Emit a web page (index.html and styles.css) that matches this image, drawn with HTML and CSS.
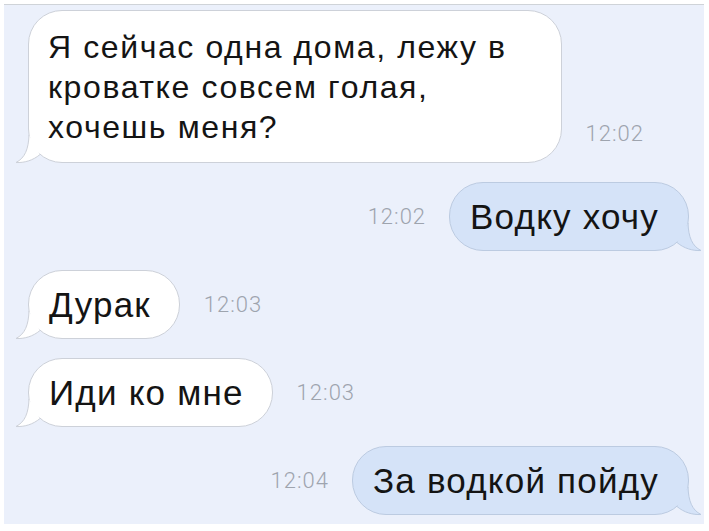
FILE: index.html
```html
<!DOCTYPE html>
<html lang="ru">
<head>
    <meta charset="UTF-8">
    <meta name="viewport" content="width=device-width, initial-scale=1.0">
    <title>Переписка</title>
    <link rel="stylesheet" href="styles.css">
</head>
<body>
    <div class="chat">
        <div class="row row-end">
            <div class="bubble in multi">
                Я сейчас одна дома, лежу в<br>кроватке совсем голая,<br>хочешь меня?
                <svg class="tail" width="30" height="28" viewBox="0 0 30 28"><path d="M14 0 C13.5 14 10 23 1 27.5 C9 28 18 25.5 25 19.5"/></svg>
            </div>
            <span class="time">12:02</span>
        </div>

        <div class="row out-row">
            <span class="time">12:02</span>
            <div class="bubble out">
                Водку хочу
                <svg class="tail" width="30" height="28" viewBox="0 0 30 28"><path d="M14 0 C13.5 14 10 23 1 27.5 C9 28 18 25.5 25 19.5"/></svg>
            </div>
        </div>

        <div class="row">
            <div class="bubble in">
                Дурак
                <svg class="tail" width="30" height="28" viewBox="0 0 30 28"><path d="M14 0 C13.5 14 10 23 1 27.5 C9 28 18 25.5 25 19.5"/></svg>
            </div>
            <span class="time">12:03</span>
        </div>

        <div class="row">
            <div class="bubble in">
                Иди ко мне
                <svg class="tail" width="30" height="28" viewBox="0 0 30 28"><path d="M14 0 C13.5 14 10 23 1 27.5 C9 28 18 25.5 25 19.5"/></svg>
            </div>
            <span class="time">12:03</span>
        </div>

        <div class="row out-row">
            <span class="time">12:04</span>
            <div class="bubble out">
                За водкой пойду
                <svg class="tail" width="30" height="28" viewBox="0 0 30 28"><path d="M14 0 C13.5 14 10 23 1 27.5 C9 28 18 25.5 25 19.5"/></svg>
            </div>
        </div>
    </div>
</body>
</html>
```

FILE: styles.css
```css
body {
    margin: 0;
    background: #ffffff;
    font-family: "Liberation Sans", Arial, sans-serif;
}
.chat {
    margin: 4px 5px 0 4px;
    height: 520px;
    border-top: 1px solid #cfd3d8;
    background: #ebf0fb;
    padding: 5px 15px 0 24px;
    box-sizing: border-box;
    display: flex;
    flex-direction: column;
    gap: 19px;
}
.row {
    display: flex;
    align-items: center;
    gap: 24px;
}
.row-end {
    align-items: flex-end;
}
.row-end .time {
    margin-bottom: 18px;
}
.out-row {
    justify-content: flex-end;
    gap: 23px;
}
.bubble {
    position: relative;
    font-size: 35px;
    line-height: 41px;
    letter-spacing: 1.2px;
    color: #141414;
    padding: 13px 28px 13px 20px;
    border-radius: 34px;
    white-space: nowrap;
}
.bubble.in {
    background: #ffffff;
    border: 1px solid #cdd1d9;
}
.bubble.out {
    background: #d5e3f8;
    border: 1px solid #bccbe1;
    padding: 13px 29px 13px 20px;
}
.bubble.multi {
    font-size: 32px;
    line-height: 40px;
    letter-spacing: 1.6px;
    padding: 16px 54px 15px 19px;
}
.tail {
    position: absolute;
    bottom: -1px;
    left: -14px;
    overflow: visible;
}
.bubble.in .tail path {
    fill: #ffffff;
    stroke: #cdd1d9;
    stroke-width: 1;
}
.bubble.out .tail {
    left: auto;
    right: -14px;
    transform: scaleX(-1);
}
.bubble.out .tail path {
    fill: #d5e3f8;
    stroke: #bccbe1;
    stroke-width: 1;
}
.time {
    font-family: Roboto, "Liberation Sans", sans-serif;
    font-weight: 300;
    font-size: 22px;
    line-height: 22px;
    letter-spacing: 1px;
    color: #9ea4ae;
}
```
